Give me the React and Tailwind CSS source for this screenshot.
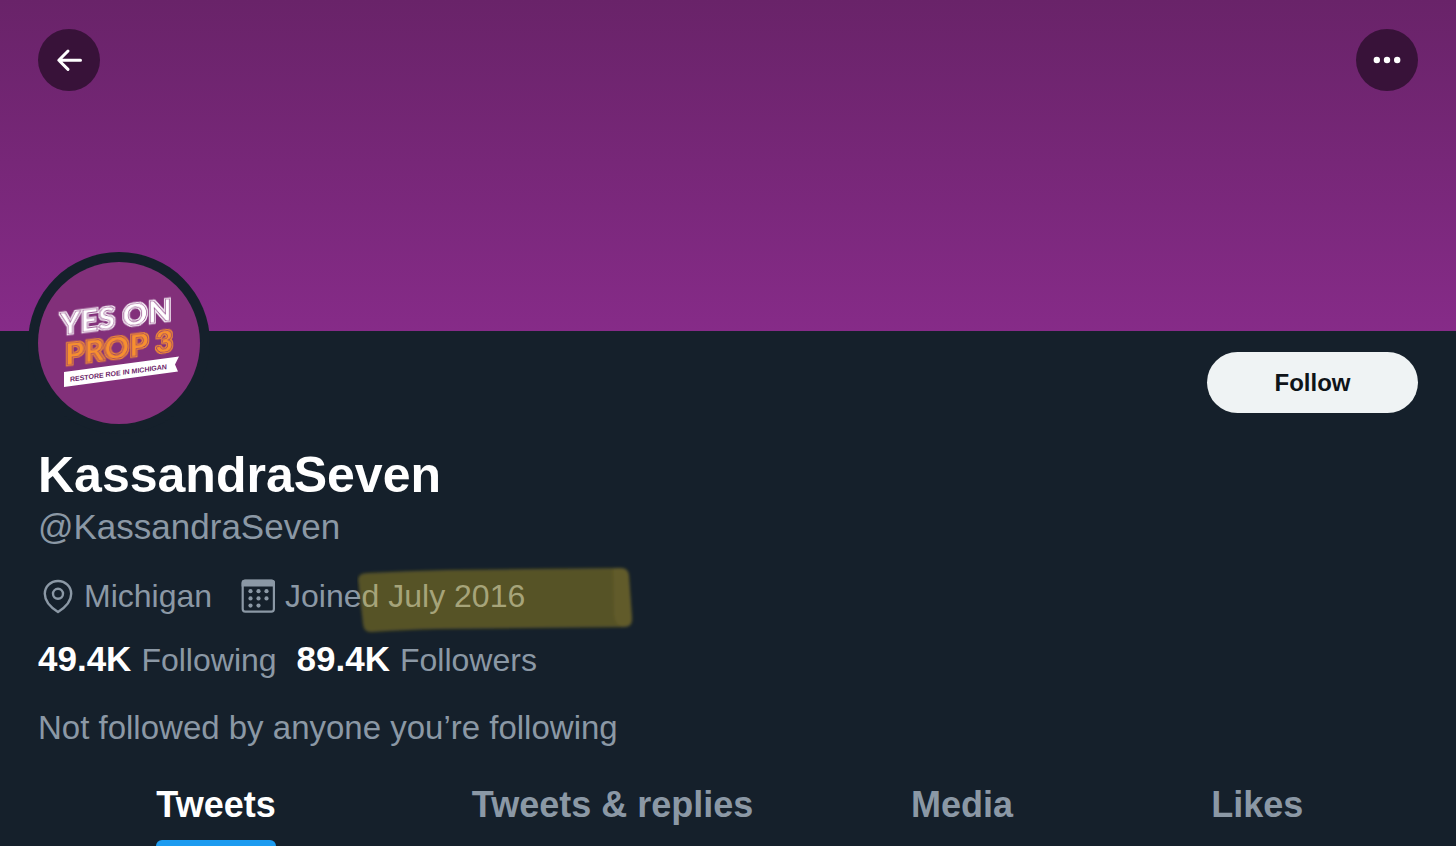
import React from "react";

const tabs = ["Tweets", "Tweets & replies", "Media", "Likes"];

const BackIcon = () => (
  <svg viewBox="0 0 28 28" className="h-7 w-7" fill="none" stroke="currentColor" strokeWidth="3" strokeLinecap="round" strokeLinejoin="round" aria-hidden="true">
    <path d="M25.5 14.2H4M13 5L3.8 14.2L13 23.4" />
  </svg>
);

const MoreIcon = () => (
  <svg viewBox="0 0 28 28" className="h-7 w-7" fill="currentColor" aria-hidden="true">
    <circle cx="3.8" cy="14" r="3.2" />
    <circle cx="14" cy="14" r="3.2" />
    <circle cx="24.2" cy="14" r="3.2" />
  </svg>
);

const PinIcon = () => (
  <svg viewBox="0 0 38 38" className="h-[38px] w-[38px] shrink-0" fill="none" stroke="currentColor" strokeWidth="2.4" strokeLinejoin="round" aria-hidden="true">
    <path d="M20 35C16 32.5 6.8 26.5 6.8 16.8C6.8 9.6 12.7 4 20 4C27.3 4 33.2 9.6 33.2 16.8C33.2 26.5 24 32.5 20 35Z" />
    <circle cx="20" cy="16.8" r="5" />
  </svg>
);

const CalendarIcon = () => (
  <svg viewBox="0 0 38 38" className="h-[38px] w-[38px] shrink-0" fill="currentColor" aria-hidden="true">
    <rect x="3.7" y="3.7" width="31.2" height="31" rx="2.6" fill="none" stroke="currentColor" strokeWidth="2.2" />
    <path d="M2.6 6Q2.6 2.8 5.8 2.8H32.8Q36 2.8 36 6V9.4H2.6Z" />
    <circle cx="11.5" cy="14.2" r="2.1" />
    <circle cx="19.5" cy="14.2" r="2.1" />
    <circle cx="27.5" cy="14.2" r="2.1" />
    <circle cx="11.5" cy="21.4" r="2.1" />
    <circle cx="19.5" cy="21.4" r="2.1" />
    <circle cx="27.5" cy="21.4" r="2.1" />
    <circle cx="11.5" cy="28.6" r="2.1" />
    <circle cx="19.5" cy="28.6" r="2.1" />
  </svg>
);

const Avatar = () => (
  <div className="-mt-[100px] -ml-2.5 h-[182px] w-[182px] shrink-0 rounded-full bg-[#15202b] p-2.5">
    <svg viewBox="0 0 162 162" className="h-full w-full rounded-full bg-[#82307a]" role="img" aria-label="Yes on Prop 3">
      {/* grows each letter outwards so its purple stroke reads as an inline */}
      <filter id="whiteEdge" x="-10%" y="-20%" width="120%" height="140%" colorInterpolationFilters="sRGB">
        <feMorphology in="SourceAlpha" operator="dilate" radius="1" result="grown" />
        <feFlood floodColor="#ffffff" />
        <feComposite in2="grown" operator="in" result="edge" />
        <feMerge>
          <feMergeNode in="edge" />
          <feMergeNode in="SourceGraphic" />
        </feMerge>
      </filter>
      <filter id="orangeEdge" x="-10%" y="-20%" width="120%" height="140%" colorInterpolationFilters="sRGB">
        <feMorphology in="SourceAlpha" operator="dilate" radius="1" result="grown" />
        <feFlood floodColor="#f7902f" />
        <feComposite in2="grown" operator="in" result="edge" />
        <feMerge>
          <feMergeNode in="edge" />
          <feMergeNode in="SourceGraphic" />
        </feMerge>
      </filter>
      <g transform="skewY(-7.5)" stroke="#82307a" strokeWidth="0.6">
        <text x="22" y="76" fill="#ffffff" filter="url(#whiteEdge)" className="font-['Lato',sans-serif] text-[31px] font-black">YES ON</text>
        <text x="27" y="107" fill="#f7902f" filter="url(#orangeEdge)" className="font-['Lato',sans-serif] text-[31px] font-black">PROP 3</text>
      </g>
      <path d="M26 110L141 94.5L137 102.5L140 109.5L26 125Z" fill="#ffffff" />
      <text x="32" y="124" fill="#6b2468" transform="skewY(-7.5)" className="font-['Liberation_Sans',Arial,sans-serif] text-[7px] font-bold">RESTORE ROE IN MICHIGAN</text>
    </svg>
  </div>
);

// marker stroke laid over the join date
const Highlight = () => (
  <svg viewBox="0 0 280 72" className="pointer-events-none absolute -top-3 left-[72px] h-[72px] w-[280px]" aria-hidden="true">
    <filter id="soft" x="-5%" y="-10%" width="110%" height="120%">
      <feGaussianBlur stdDeviation="1.4" />
    </filter>
    <g fill="#e0bf22" filter="url(#soft)">
      <path d="M1 15Q2 9 10 9Q50 7 90 6L262 4Q271 3 272 11L275 53Q276 63 267 63L80 65Q45 66 15 68Q7 69 6 60Z" fillOpacity="0.32" />
      <path d="M256 5Q270 1 272 11L275 53Q276 63 267 63Q258 62 257 51Z" fillOpacity="0.08" />
    </g>
  </svg>
);

const App = () => {
  return (
    <div className="min-h-screen bg-[#15202b] font-['Liberation_Sans',Arial,sans-serif] text-[#8b98a5]">
      <header className="flex h-[331px] items-start justify-between bg-linear-to-b from-[#692369] to-[#862b88] px-[38px] pt-[29px]">
        <button type="button" aria-label="Back" className="flex h-[62px] w-[62px] items-center justify-center rounded-full bg-[#381239] text-white">
          <BackIcon />
        </button>
        <button type="button" aria-label="More" className="flex h-[62px] w-[62px] items-center justify-center rounded-full bg-[#381239] text-white">
          <MoreIcon />
        </button>
      </header>

      <main>
        <section className="px-[38px] pt-[21px]">
          <div className="flex items-start justify-between">
            <Avatar />
            <button type="button" className="h-[61px] w-[211px] rounded-full bg-[#eff3f4] text-2xl font-bold text-[#0f1419]">
              Follow
            </button>
          </div>

          <h1 className="mt-[11px] text-[50px] leading-[60px] font-bold text-white">KassandraSeven</h1>
          <p className="text-[35px] leading-[44px]">@KassandraSeven</p>

          <div className="mt-[27px] flex items-center gap-[27px] text-[32px] leading-[40px]">
            <span className="flex items-center gap-2">
              <PinIcon />
              Michigan
            </span>
            <span className="flex items-center gap-2">
              <CalendarIcon />
              <span className="relative">
                Joined July 2016
                <Highlight />
              </span>
            </span>
          </div>

          <div className="mt-[23px] flex gap-5 text-[32px] leading-[40px]">
            <a href="#following" className="flex items-baseline gap-2.5">
              <strong className="text-[35px] font-bold text-white">49.4K</strong>
              Following
            </a>
            <a href="#followers" className="flex items-baseline gap-2.5">
              <strong className="text-[35px] font-bold text-white">89.4K</strong>
              Followers
            </a>
          </div>

          <p className="mt-7 text-[33px] leading-[40px]">Not followed by anyone you’re following</p>
        </section>

        <nav className="mt-[35px] grid grid-cols-[432fr_361fr_338fr_252fr] pr-[5%] text-4xl leading-[44px] font-bold">
          {tabs.map((tab, i) => (
            <a key={tab} href={`#tab-${i}`} className="flex justify-center">
              <span className={i === 0 ? "text-white" : ""}>
                {tab}
                {i === 0 && <span className="mt-[13px] block h-1.5 rounded-t-full bg-[#1d9bf0]" />}
              </span>
            </a>
          ))}
        </nav>
      </main>
    </div>
  );
};

export default App;
